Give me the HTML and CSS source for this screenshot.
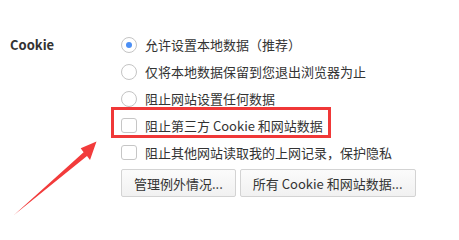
FILE: index.html
```html
<!DOCTYPE html>
<html lang="zh-CN">
<head>
<meta charset="utf-8">
<title>Cookie 设置</title>
<link rel="stylesheet" href="styles.css">
</head>
<body>
<div class="page">
  <section class="setting">
    <div class="label">Cookie</div>
    <div class="options">
      <label class="row"><span class="radio checked"></span><span class="text">允许设置本地数据（推荐）</span></label>
      <label class="row"><span class="radio"></span><span class="text">仅将本地数据保留到您退出浏览器为止</span></label>
      <label class="row"><span class="radio"></span><span class="text">阻止网站设置任何数据</span></label>
      <label class="row marked"><span class="checkbox"></span><span class="text">阻止第三方 Cookie 和网站数据</span><span class="highlight"></span></label>
      <label class="row"><span class="checkbox"></span><span class="text">阻止其他网站读取我的上网记录，保护隐私</span></label>
      <div class="buttons">
        <button class="btn">管理例外情况...</button>
        <button class="btn">所有 Cookie 和网站数据...</button>
      </div>
    </div>
  </section>
  <svg class="arrow" width="459" height="228" viewBox="0 0 459 228" aria-hidden="true">
    <polygon points="14,215 83.6,152.2 80.7,148.3 96.5,141.5 90,160 87,156" fill="#f23b3b"/>
  </svg>
</div>
</body>
</html>
```

FILE: styles.css
```css
html, body {
  margin: 0;
  padding: 0;
  background: #ffffff;
}

body {
  font-family: "Noto Sans CJK SC", "Noto Sans", sans-serif;
  font-size: 13px;
  color: #333333;
}

.page {
  position: relative;
  width: 459px;
  height: 228px;
  overflow: hidden;
}

.setting {
  display: grid;
  grid-template-columns: 111px auto;
  padding: 31px 0 0 10px;
}

.label {
  font-weight: bold;
  font-size: 13px;
  line-height: 27px;
  color: #333333;
}

.options {
  display: flex;
  flex-direction: column;
}

.row {
  position: relative;
  display: flex;
  align-items: center;
  height: 27px;
  gap: 8px;
  white-space: nowrap;
}

.text {
  line-height: 27px;
}

.radio {
  box-sizing: border-box;
  width: 16px;
  height: 16px;
  border: 1px solid #c4c4c4;
  border-radius: 50%;
  background: #ffffff;
  display: flex;
  align-items: center;
  justify-content: center;
  flex: none;
}

.radio.checked::after {
  content: "";
  width: 6px;
  height: 6px;
  border-radius: 50%;
  background: #4b8ff5;
}

.checkbox {
  box-sizing: border-box;
  width: 16px;
  height: 15px;
  border: 1px solid #c6c6c6;
  border-radius: 3px;
  background: #ffffff;
  flex: none;
}

.highlight {
  position: absolute;
  left: -10px;
  top: -5px;
  width: 220px;
  height: 31px;
  box-sizing: border-box;
  border: 3px solid #f03838;
  pointer-events: none;
}

.buttons {
  display: flex;
  gap: 4px;
  margin-top: 3px;
}

.btn {
  box-sizing: border-box;
  height: 28px;
  padding: 0 12px;
  border: 1px solid #d3d3d3;
  border-radius: 2px;
  background: linear-gradient(#fbfbfb, #f1f1f1);
  font-family: "Noto Sans CJK SC", "Noto Sans", sans-serif;
  font-size: 13px;
  color: #333333;
  white-space: nowrap;
}

.arrow {
  position: absolute;
  left: 0;
  top: 0;
  pointer-events: none;
}
```
